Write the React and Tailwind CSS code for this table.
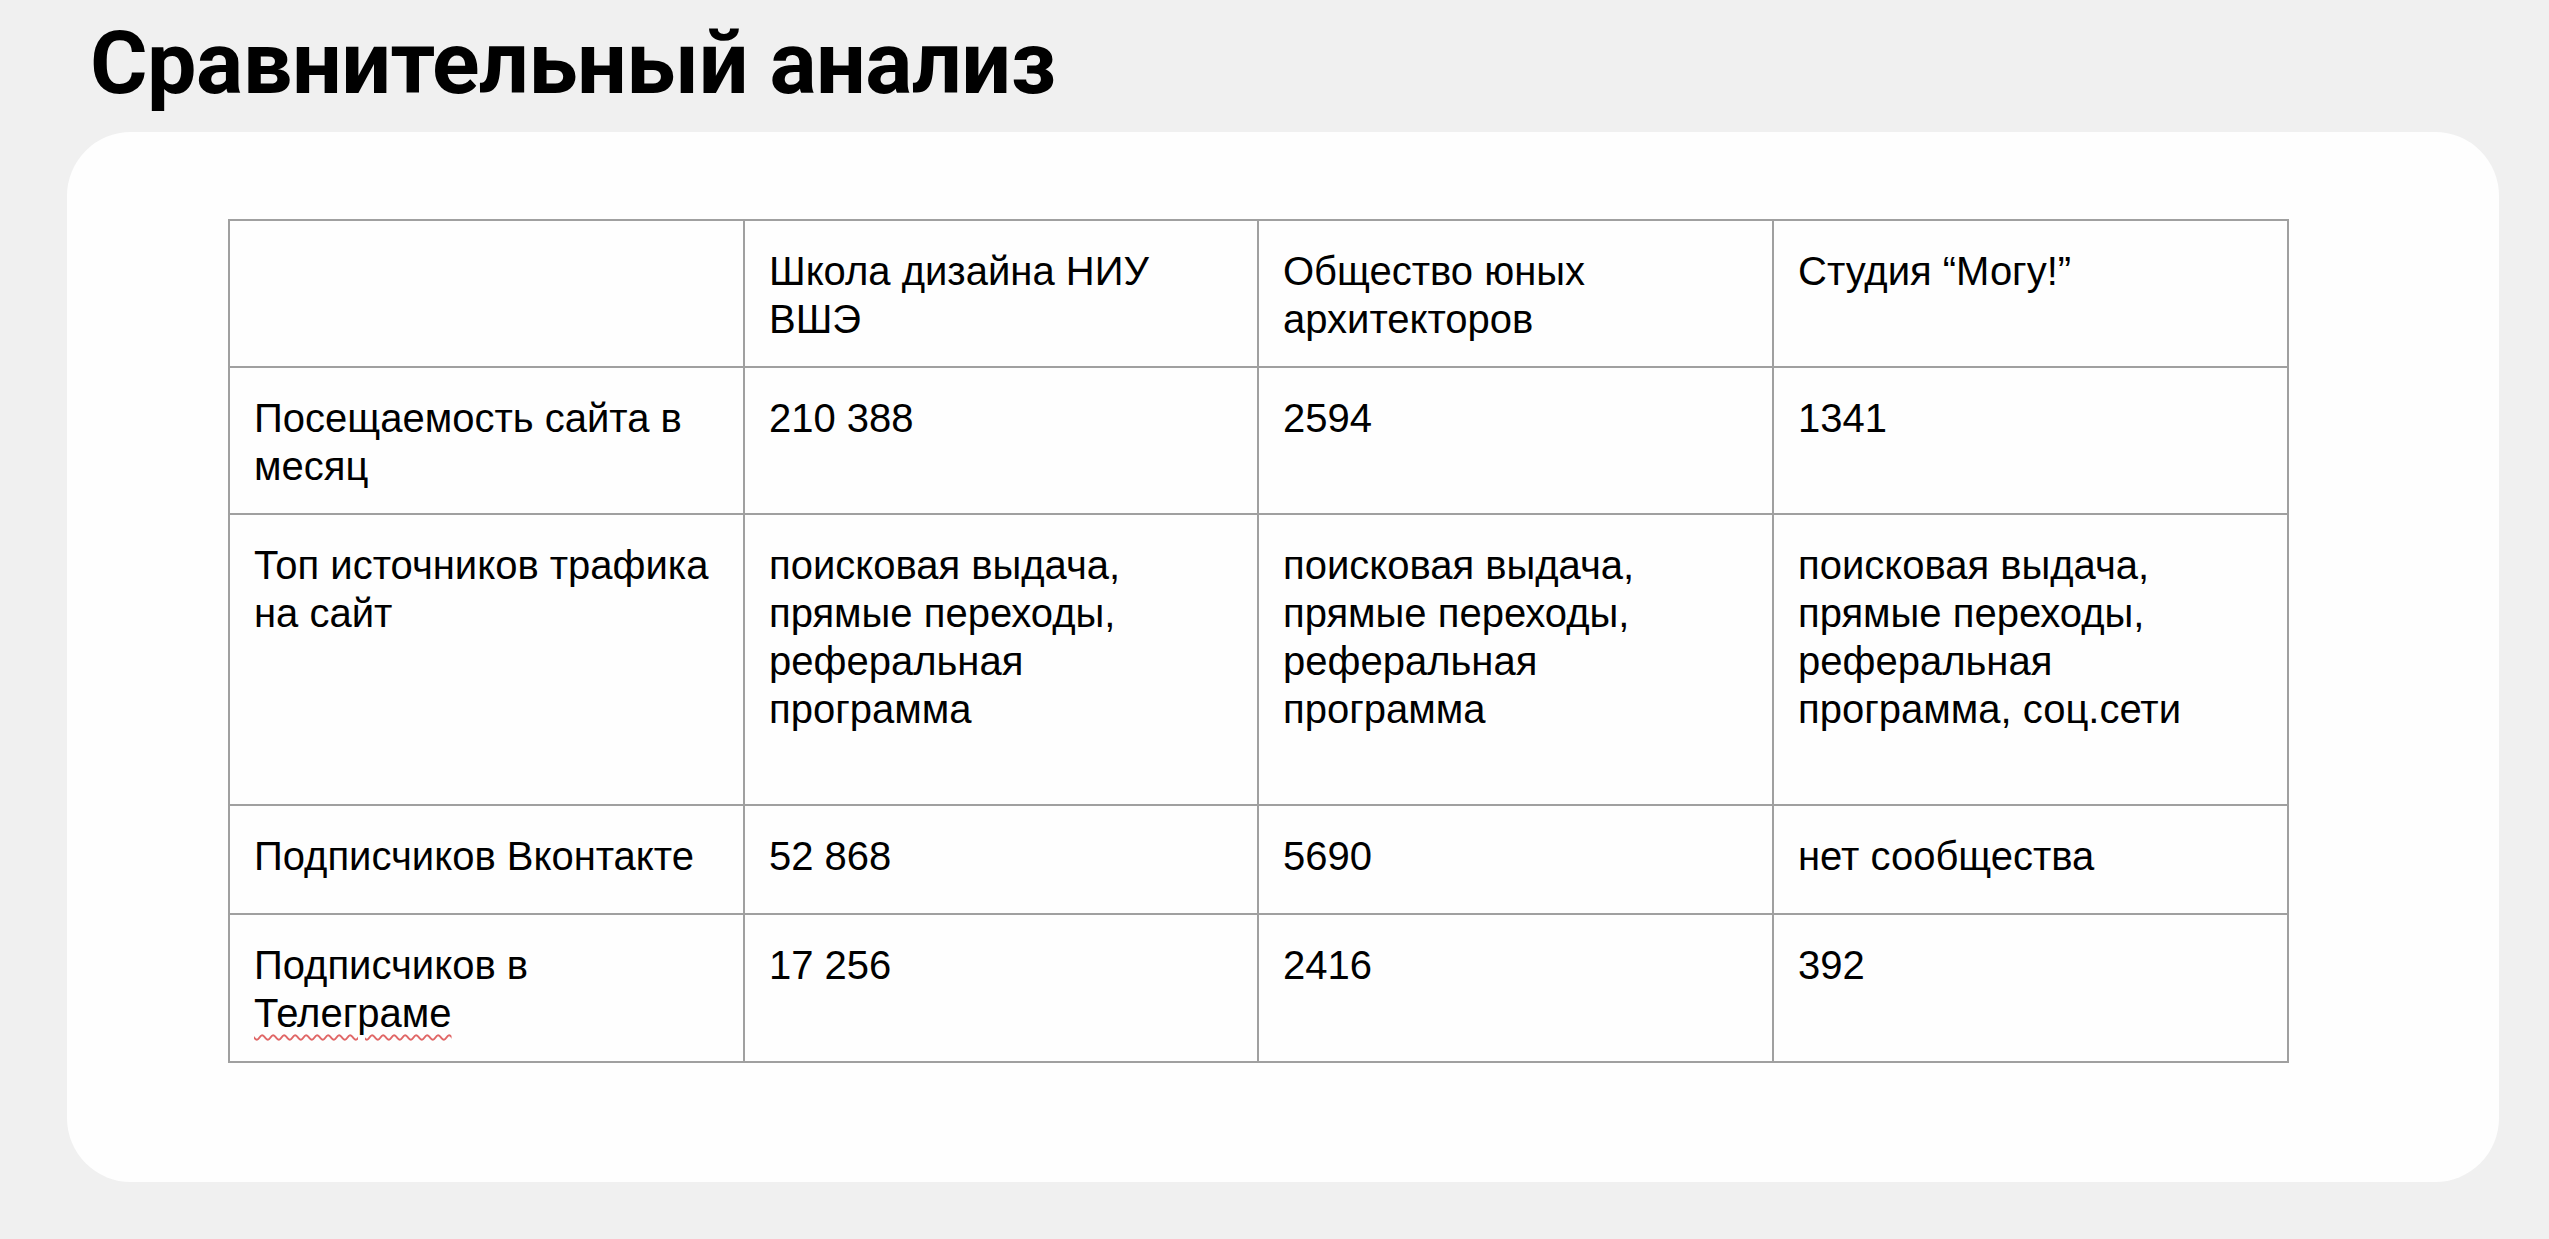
import React from "react";

const rows = [
  { h: "h-[147px]", cells: [[""], ["Школа дизайна НИУ", "ВШЭ"], ["Общество юных", "архитекторов"], ["Студия “Могу!”"]] },
  { h: "h-[147px]", cells: [["Посещаемость сайта в", "месяц"], ["210 388"], ["2594"], ["1341"]] },
  {
    h: "h-[291px]",
    cells: [
      ["Топ источников трафика", "на сайт"],
      ["поисковая выдача,", "прямые переходы,", "реферальная", "программа"],
      ["поисковая выдача,", "прямые переходы,", "реферальная", "программа"],
      ["поисковая выдача,", "прямые переходы,", "реферальная", "программа, соц.сети"],
    ],
  },
  { h: "h-[109px]", cells: [["Подписчиков Вконтакте"], ["52 868"], ["5690"], ["нет сообщества"]] },
  { h: "h-[148px]", cells: [["Подписчиков в", "TELEGRAM"], ["17 256"], ["2416"], ["392"]] },
];

function Cell({ lines, h }) {
  return (
    <div className={`${h} border-r-2 border-b-2 border-[#a0a0a0] pl-[24px] pt-[26px] whitespace-nowrap`}>
      {lines.map((l, i) =>
        l === "TELEGRAM" ? (
          <div key={i}>
            <span className="underline decoration-wavy decoration-[#e06666] decoration-[1.5px] underline-offset-[7px]">Телеграме</span>
          </div>
        ) : (
          <div key={i}>{l || "\u00a0"}</div>
        )
      )}
    </div>
  );
}

export default function App() {
  return (
    <div className="w-[2549px] h-[1239px] bg-[#f0f0f0] overflow-hidden">
      <div className="pt-[19px] pl-[90px]">
        <h1 className="font-['Roboto',sans-serif] font-bold text-[88px] leading-[88px] text-black tracking-[-0.5px]">
          Сравнительный анализ
        </h1>
      </div>
      <div className="mt-[25px] ml-[67px] w-[2432px] h-[1050px] bg-[#fefefe] rounded-[64px] pt-[87px] pl-[161px]">
        <div className="grid grid-cols-[515px_514px_515px_515px] w-[2061px] border-l-2 border-t-2 border-[#a0a0a0] font-['Liberation_Sans',Arial,sans-serif] text-[40px] leading-[48px] text-black">
          {rows.map((r, ri) =>
            r.cells.map((c, ci) => <Cell key={ri + "-" + ci} lines={c} h={r.h} />)
          )}
        </div>
      </div>
    </div>
  );
}
